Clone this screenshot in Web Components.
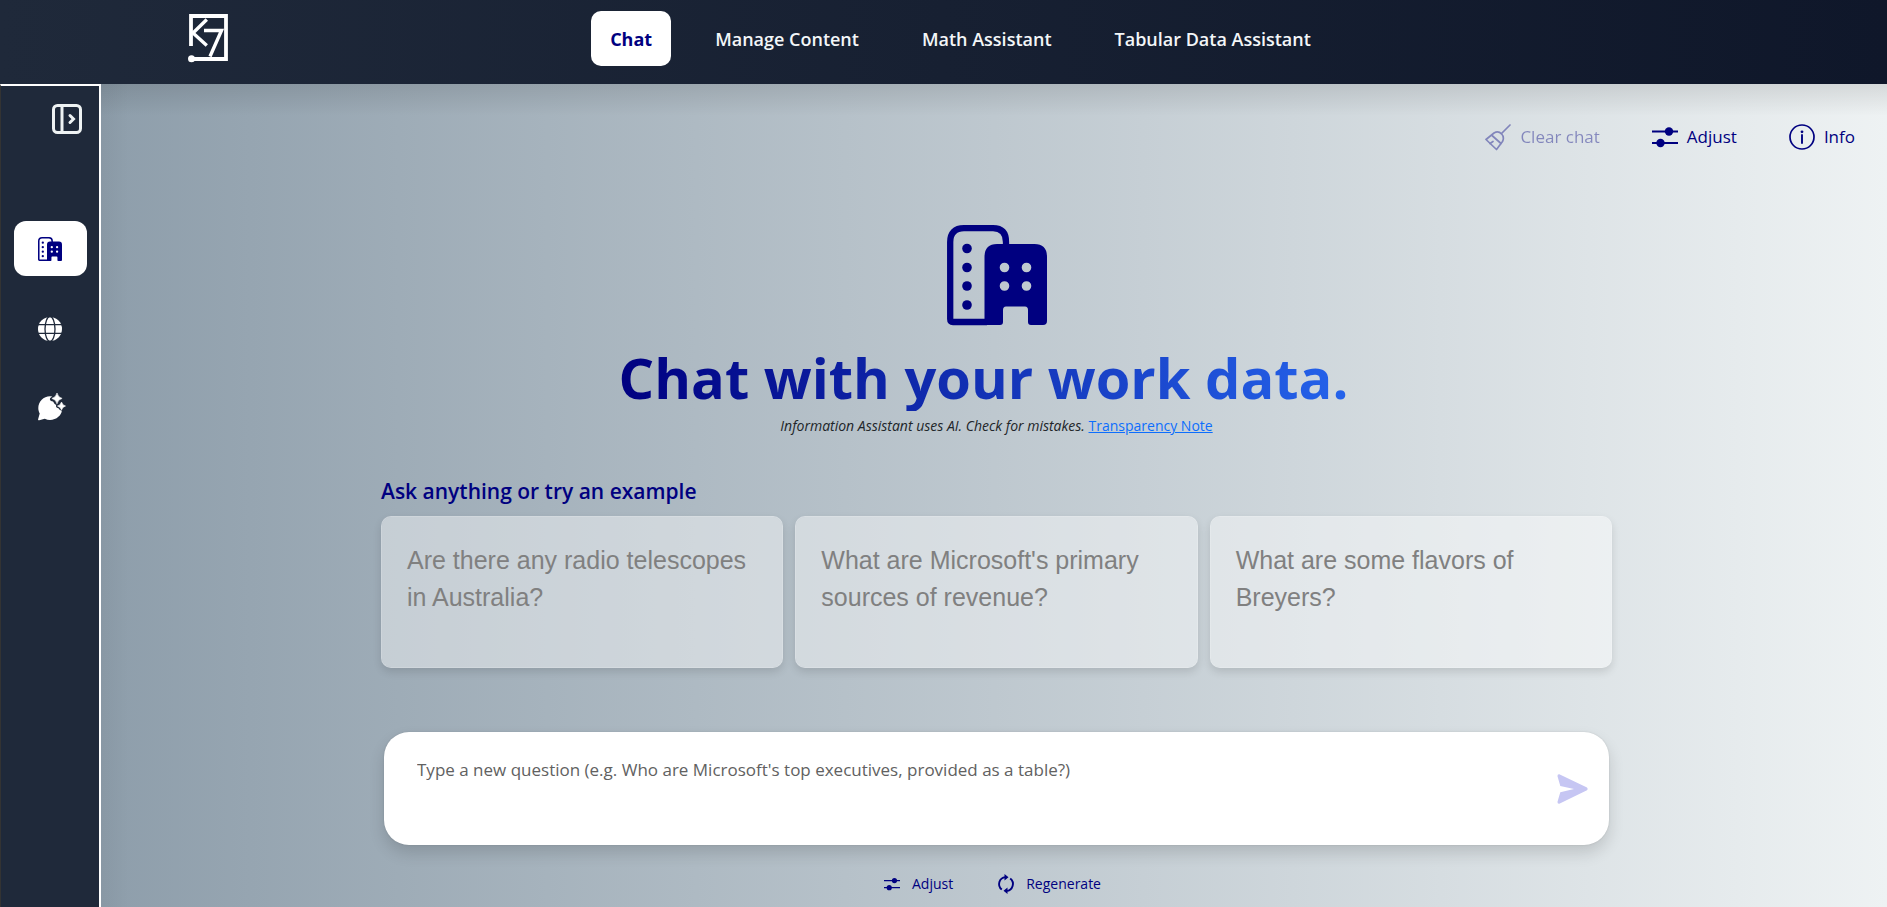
<!DOCTYPE html>
<html lang="en">
<head>
<meta charset="utf-8">
<title>Information Assistant</title>
<style>
  html, body { margin: 0; min-height: 100vh; }
  body {
    display: flex;
    font-family: "Open Sans", "Noto Sans", sans-serif;
    background: #1f293a;
  }
  assistant-app { flex: 1; }
</style>
</head>
<body>
<assistant-app></assistant-app>

<script>
const define = (name, html, setup) => {
  const template = document.createElement("template");
  template.innerHTML = html;
  customElements.define(name, class extends HTMLElement {
    constructor() {
      super();
      this.attachShadow({ mode: "open" }).append(template.content.cloneNode(true));
    }
    connectedCallback() {
      if (setup) setup(this, this.shadowRoot);
    }
  });
};

const ICONS = {
  logo: ["0 0 40 48", `<g fill="none" stroke="#fff" stroke-width="3.8">
      <path d="M3 32V2H38V45H4"/>
      <path d="M18.800 5.500L5 19L18.800 31.500" stroke-width="3.400"/>
      <path d="M16 16.500H33.500L22 42.500" stroke-width="3.400"/></g>
      <circle cx="3.500" cy="44.700" r="3.500" fill="#fff"/>`],
  panel: ["0 0 30 30", `<g fill="none" stroke="#eef2f3" stroke-width="3">
      <rect x="1.5" y="1.5" width="27" height="27" rx="4"/><path d="M10 2V28"/>
      <path d="M18 11.500L21.500 15L18 18.500" stroke-linecap="round"/></g>`],
  building: ["0 0 100 100", `<path fill="none" stroke="currentColor" stroke-width="6.300" stroke-linejoin="round"
      d="M40 97H6Q3.200 97 3.200 94V17Q3.200 3.200 17 3.200H46Q59 3.200 59 17V22"/>
      <g fill="currentColor"><circle cx="20" cy="23.500" r="4.800"/><circle cx="20" cy="42.500" r="4.800"/>
      <circle cx="20" cy="61" r="4.800"/><circle cx="20" cy="80" r="4.800"/>
      <path fill-rule="evenodd" d="M50 19H87.500Q100 19 100 32V96Q100 100 96 100H84Q81 100 81 97V85Q81 81.500 78 81.500H59Q56 81.500 56 85V97Q56 100 53 100H37.500V32Q37.500 19 50 19Z
      M57.500 37.700A4.800 4.800 0 1 0 57.500 47.300A4.800 4.800 0 1 0 57.500 37.700Z
      M79.500 37.700A4.800 4.800 0 1 0 79.500 47.300A4.800 4.800 0 1 0 79.500 37.700Z
      M57.500 56.200A4.800 4.800 0 1 0 57.500 65.800A4.800 4.800 0 1 0 57.500 56.200Z
      M79.500 56.200A4.800 4.800 0 1 0 79.500 65.800A4.800 4.800 0 1 0 79.500 56.200Z"/></g>`],
  globe: ["0 0 24 24", `<circle cx="12" cy="12" r="12" fill="currentColor"/>
      <g fill="none" stroke="#1f293a" stroke-width="1.300"><ellipse cx="12" cy="12" rx="5" ry="12.500"/>
      <path d="M0 7.700H24M0 16.300H24"/></g>`],
  sparkle: ["0.500 4 24 24", `<path fill="currentColor" d="M12.500 3.200C6 3.200 .800 8.500 .800 15C.800 17 1.300 18.800 2.200 20.400L.600 26.200C.400 27 1 27.500 1.700 27.300L7.300 25.700C9 26.600 10.700 27 12.500 27C19 27 24.300 21.800 24.300 17.500C23 18 21.500 16 21 15.200C18.500 15 18 12.500 19 11.700C17.500 12 16.500 10 15.500 8.500C12.500 8.500 11.500 6 13.300 4.600L14.800 3.400Z"/>
      <path fill="currentColor" d="M19.500 0Q20.500 4.500 24.600 5.400Q20.500 6.300 19.500 10.800Q18.500 6.300 14.400 5.400Q18.500 4.500 19.500 0ZM24 9Q24.800 12.200 28 13Q24.800 13.800 24 17Q23.200 13.800 20 13Q23.200 12.200 24 9Z" stroke="currentColor" stroke-width=".6"/>`],
  broom: ["0 0 26 26", `<g fill="none" stroke="currentColor" stroke-width="1.700" stroke-linejoin="round" stroke-linecap="round">
      <path d="M25 1L16.500 9.500"/><path d="M1 15.500L11.500 25.500L17.500 17.500C19 14.500 18.500 12 16.500 9.800C14.500 7.800 11.500 7.500 9 9Z"/>
      <path d="M7 11.500L16 19.500M5 19.500L8 17.500"/></g>`],
  adjust: ["0 0 26 26", `<path d="M0 7.500H26M0 19H26" stroke="currentColor" stroke-width="2"/>
      <circle cx="17" cy="7.500" r="4.200" fill="currentColor"/><circle cx="8.500" cy="19" r="4.200" fill="currentColor"/>`],
  info: ["0 0 26 26", `<circle cx="13" cy="13" r="12" fill="none" stroke="currentColor" stroke-width="1.700"/>
      <path d="M13 11V19" stroke="currentColor" stroke-width="1.900" stroke-linecap="round"/><circle cx="13" cy="7.800" r="1.400" fill="currentColor"/>`],
  send: ["0 0 31 30", `<path fill="currentColor" d="M2.300 .300L30 13.400Q31.500 14.800 30 16.200L2.300 29.700Q.300 30 .500 27.800L3.300 18.200L17 15L3.300 12L.500 2.200Q.300 0 2.300 .300Z"/>`],
  refresh: ["0 0 16 20", `<g fill="none" stroke="currentColor" stroke-width="1.900"><path d="M3.800 15.600A7 7 0 0 1 7.500 3.100M12.200 4.400A7 7 0 0 1 8.500 16.900"/></g>
      <path fill="currentColor" d="M6.500 0L10.500 3.200L6.500 6.400ZM9.500 20L5.500 16.800L9.500 13.600Z"/>`]
};

define("ui-icon", `
  <style>
    :host { display: block; flex: none; }
    svg { display: block; width: 100%; height: 100%; overflow: visible; }
  </style>
  <svg aria-hidden="true"></svg>`,
  (host, root) => {
    const [box, shapes] = ICONS[host.getAttribute("name")];
    const svg = root.querySelector("svg");
    svg.setAttribute("viewBox", box);
    svg.innerHTML = shapes;
  });

define("nav-link", `
  <style>
    :host { display: block; }
    a {
      display: flex; align-items: center; height: 55px; padding: 0 19px;
      border-radius: 10px; color: #f3f6f8; text-decoration: none;
      font-size: 18px; font-weight: 600; white-space: nowrap;
    }
    :host([current]) a { background: #fff; color: #000080; font-weight: 700; }
  </style>
  <a href="#"><slot></slot></a>`);

define("app-header", `
  <style>
    :host {
      display: grid; grid-template-columns: 1fr auto 1fr; align-items: start;
      box-sizing: border-box; height: 84px; padding: 11px 0 0 34px;
      background: linear-gradient(to right, #1f293a, #0f172a);
    }
    .logo { display: block; margin: 3px 0 0 154px; width: 40px; }
    .logo ui-icon { width: 40px; height: 48px; }
    nav { display: flex; gap: 25px; }
  </style>
  <a class="logo" href="#" aria-label="Home"><ui-icon name="logo"></ui-icon></a>
  <nav>
    <nav-link current>Chat</nav-link>
    <nav-link>Manage Content</nav-link>
    <nav-link>Math Assistant</nav-link>
    <nav-link>Tabular Data Assistant</nav-link>
  </nav>`);

define("rail-button", `
  <style>
    :host { display: block; }
    button {
      display: grid; place-items: center; width: 73px; height: 55px; padding: 0;
      border: 0; border-radius: 12px; background: none; color: #fff;
    }
    ui-icon { width: 24px; height: 24px; }
    :host([current]) button { background: #fff; color: #000080; }
  </style>
  <button type="button"></button>`,
  (host, root) => {
    const button = root.querySelector("button");
    button.setAttribute("aria-label", host.getAttribute("label"));
    const icon = document.createElement("ui-icon");
    icon.setAttribute("name", host.getAttribute("icon"));
    button.replaceChildren(icon);
  });

define("side-rail", `
  <style>
    :host {
      display: flex; flex-direction: column; align-items: center;
      box-sizing: border-box; width: 101px; padding: 18px 0 0;
      background: #1f293a; border: solid #fff; border-width: 2px 2px 0 0;
      border-left: 1px solid #333;
    }
    .toggle {
      align-self: flex-end; margin: 0 17px 87px 0; padding: 0;
      border: 0; background: none;
    }
    .toggle ui-icon { width: 30px; height: 30px; }
    nav { display: grid; gap: 25px; }
  </style>
  <button class="toggle" type="button" aria-label="Expand panel"><ui-icon name="panel"></ui-icon></button>
  <nav>
    <rail-button current icon="building" label="Work data"></rail-button>
    <rail-button icon="globe" label="Web"></rail-button>
    <rail-button icon="sparkle" label="Generative chat"></rail-button>
  </nav>`);

define("tool-button", `
  <style>
    :host { display: block; }
    button {
      display: flex; align-items: center; gap: 9px; padding: 0; border: 0;
      background: none; color: #000080; font: inherit; font-size: 17px; line-height: 26px;
    }
    button:disabled { opacity: .4; }
    .glyph { width: 26px; height: 26px; }
    :host([small]) button { gap: 12px; font-size: 14px; line-height: 20px; }
    :host([small]) .glyph { width: 16px; height: 20px; }
  </style>
  <button type="button"><span class="glyph"></span><slot></slot></button>`,
  (host, root) => {
    root.querySelector("button").disabled = host.hasAttribute("disabled");
    const icon = document.createElement("ui-icon");
    icon.className = "glyph";
    icon.setAttribute("name", host.getAttribute("icon"));
    root.querySelector(".glyph").replaceWith(icon);
  });

define("example-card", `
  <style>
    :host { display: grid; }
    button {
      display: flex; align-items: flex-start; box-sizing: border-box; min-height: 152px;
      padding: 25px; text-align: left; border: 1px solid rgba(255,255,255,.5); border-radius: 10px;
      background: rgba(255,255,255,.42); background-clip: padding-box;
      box-shadow: 0 4px 8px rgba(0,0,0,.12); color: #808080;
      font: 25px/37px "Liberation Sans", Arial, sans-serif;
    }
  </style>
  <button type="button"><span><slot></slot></span></button>`);

define("question-box", `
  <style>
    :host {
      display: flex; align-items: center; box-sizing: border-box; height: 113px;
      padding: 25px 21px 25px 33px; border-radius: 25px; background: #fff;
      box-shadow: 0 8px 16px rgba(0,0,0,.14), 0 0 2px rgba(0,0,0,.12);
    }
    textarea {
      flex: 1; align-self: stretch; padding: 0; border: 0; outline: 0; resize: none;
      background: none; color: #222; font: inherit; font-size: 17px; line-height: 26px;
    }
    textarea::placeholder { color: #616161; opacity: 1; }
    button { padding: 0; border: 0; background: none; color: #c6c6f3; }
    ui-icon { width: 31px; height: 30px; }
  </style>
  <textarea aria-label="Question" placeholder="Type a new question (e.g. Who are Microsoft's top executives, provided as a table?)"></textarea>
  <button type="button" aria-label="Ask question"><ui-icon name="send"></ui-icon></button>`);

define("chat-hero", `
  <style>
    :host { display: flex; flex-direction: column; align-items: center; }
    ui-icon { width: 100px; height: 100px; color: #000080; }
    h1 {
      margin: 18px 26px 0 0; font-size: 56px; line-height: 68px; font-weight: 700;
      background: linear-gradient(to right, #000080, #2563eb);
      -webkit-background-clip: text; background-clip: text; color: transparent;
      white-space: nowrap;
    }
    p { margin: 5px 0 0; font-size: 14px; line-height: 20px; color: #212529; }
    a { color: #0d6efd; }
  </style>
  <ui-icon name="building"></ui-icon>
  <h1>Chat with your work data.</h1>
  <p><em>Information Assistant uses AI. Check for mistakes.</em> <a href="#">Transparency Note</a></p>`);

define("chat-page", `
  <style>
    :host {
      display: flex; flex-direction: column; box-sizing: border-box;
      padding: 40px 32px 13px; min-width: 0;
      background: linear-gradient(to bottom, rgba(0,0,0,.1), transparent 32px),
        linear-gradient(to right, rgba(0,0,0,.04), transparent 28px),
        linear-gradient(to right, #8e9eab, #eef2f3);
    }
    .tools { display: flex; justify-content: flex-end; gap: 52px; }
    .column { width: 100%; max-width: 1231px; margin: 75px auto 0; padding-left: 5px; }
    h2 { margin: 39px 0 0; font-size: 21px; line-height: 32px; font-weight: 600; color: #000080; }
    .cards { display: grid; grid-template-columns: repeat(3, 1fr); gap: 12px; margin-top: 9px; }
    question-box { margin: 64px 3px 0; }
    .actions { display: flex; justify-content: center; gap: 45px; margin: 29px 8px 0 0; }
  </style>
  <div class="tools">
    <tool-button icon="broom" disabled>Clear chat</tool-button>
    <tool-button icon="adjust">Adjust</tool-button>
    <tool-button icon="info">Info</tool-button>
  </div>
  <div class="column">
    <chat-hero></chat-hero>
    <h2>Ask anything or try an example</h2>
    <div class="cards">
      <example-card>Are there any radio telescopes in Australia?</example-card>
      <example-card>What are Microsoft's primary sources of revenue?</example-card>
      <example-card>What are some flavors of Breyers?</example-card>
    </div>
    <question-box></question-box>
    <div class="actions">
      <tool-button small icon="adjust">Adjust</tool-button>
      <tool-button small icon="refresh">Regenerate</tool-button>
    </div>
  </div>`);

define("assistant-app", `
  <style>
    :host { display: grid; grid-template-rows: auto 1fr; min-height: 100vh; }
    .body { display: grid; grid-template-columns: auto 1fr; }
  </style>
  <app-header></app-header>
  <div class="body">
    <side-rail></side-rail>
    <chat-page></chat-page>
  </div>`);
</script>
</body>
</html>
